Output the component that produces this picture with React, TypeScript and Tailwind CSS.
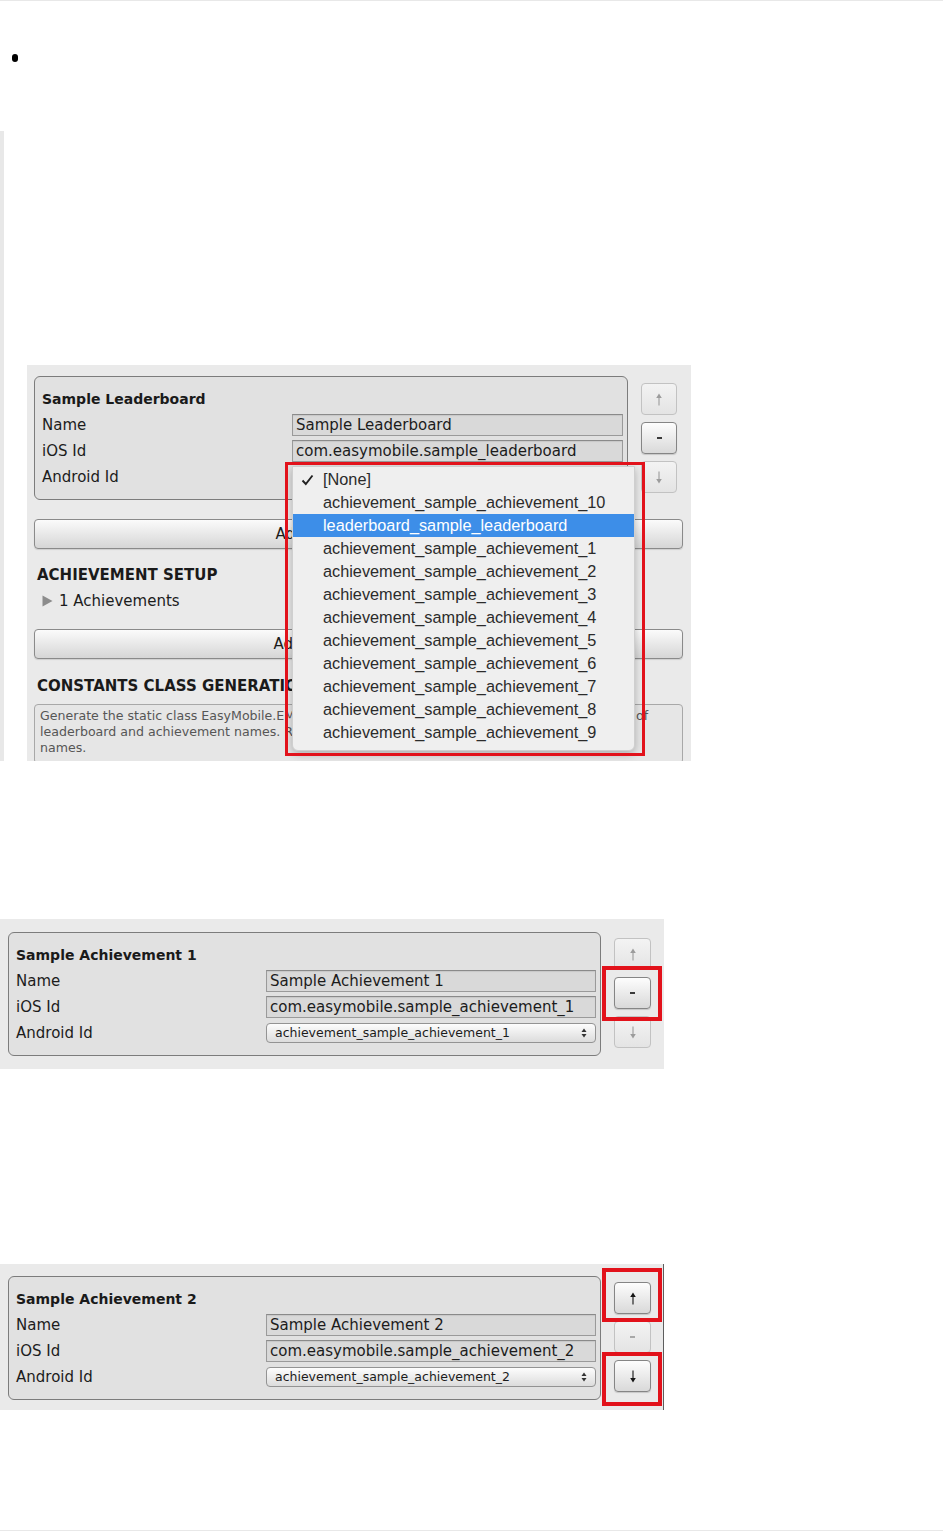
import React from "react";

const UI = "font-['DejaVu_Sans',sans-serif]";
const MENU = "font-['Liberation_Sans',Arial,sans-serif]";

function UpArrow({ on }: { on: boolean }) {
  return (
    <svg width="8" height="13" viewBox="0 0 8 13">
      <path d="M4 0.6 L1.2 5 H3.45 V12.5 H4.55 V5 H6.8 Z" fill={on ? "#151515" : "#9c9c9c"} />
    </svg>
  );
}

function DownArrow({ on }: { on: boolean }) {
  return (
    <svg width="8" height="13" viewBox="0 0 8 13">
      <path d="M4 12.4 L1.2 8 H3.45 V0.5 H4.55 V8 H6.8 Z" fill={on ? "#151515" : "#9c9c9c"} />
    </svg>
  );
}

function SideButton({ kind, on, wide }: { kind: "up" | "minus" | "down"; on: boolean; wide?: boolean }) {
  return (
    <div
      className={`${wide ? "w-[37px]" : "w-[36px]"} h-[32px] rounded-[4px] border flex items-center justify-center ${
        on
          ? "border-[#858585] bg-linear-to-b from-[#fdfdfd] to-[#d9d9d9] shadow-[0_1px_1px_rgba(0,0,0,0.15)]"
          : "border-[#c2c2c2] bg-linear-to-b from-[#f3f3f3] to-[#e4e4e4]"
      }`}
    >
      {kind === "up" ? (
        <UpArrow on={on} />
      ) : kind === "down" ? (
        <DownArrow on={on} />
      ) : (
        <div className={`w-[5px] h-[2px] ${on ? "bg-[#3a3a3a]" : "bg-[#a8a8a8]"}`} />
      )}
    </div>
  );
}

function Field({ children }: { children: React.ReactNode }) {
  return (
    <div className="flex-1 h-[22px] border border-[#9a9a9a] border-t-[#8a8a8a] bg-[#d9d9d9] shadow-[inset_0_1px_1px_rgba(0,0,0,0.08)] px-[3px] text-[15px] leading-[20px] text-[#1c1c1c] whitespace-nowrap overflow-hidden">
      {children}
    </div>
  );
}

function Popup({ children }: { children: React.ReactNode }) {
  return (
    <div className="flex-1 h-[20px] rounded-[4px] border border-[#939393] bg-linear-to-b from-[#fdfdfd] to-[#dcdcdc] pl-[8px] pr-[8px] flex items-center justify-between text-[12.5px] text-[#1c1c1c] whitespace-nowrap overflow-hidden">
      <span>{children}</span>
      <svg width="6" height="10" viewBox="0 0 6 10">
        <path d="M3 0.5 L5.5 4 H0.5 Z" fill="#333" />
        <path d="M3 9.5 L5.5 6 H0.5 Z" fill="#333" />
      </svg>
    </div>
  );
}

function Row({ label, children }: { label: string; children: React.ReactNode }) {
  return (
    <div className="h-[26px] flex items-center">
      <div className="w-[250px] text-[15px] text-[#1c1c1c] whitespace-nowrap">{label}</div>
      {children}
    </div>
  );
}

function Panel({
  title,
  name,
  ios,
  android,
  wideBox,
}: {
  title: string;
  name: string;
  ios: string;
  android: string;
  wideBox?: boolean;
}) {
  return (
    <div
      className={`${wideBox ? "w-[594px]" : "w-[593px]"} h-[124px] shrink-0 rounded-[6px] border border-[#7c7c7c] bg-[#e1e1e1] pl-[7px] pr-[4px] pt-[9px]`}
    >
      <div className="h-[26px] flex items-center font-bold text-[14px] text-[#1a1a1a]">{title}</div>
      <Row label="Name">
        <Field>{name}</Field>
      </Row>
      <Row label="iOS Id">
        <Field>{ios}</Field>
      </Row>
      <Row label="Android Id">
        <Popup>{android}</Popup>
      </Row>
    </div>
  );
}

function AddBar({ label, mt }: { label: string; mt: string }) {
  return (
    <div
      className={`${mt} w-[649px] h-[30px] rounded-[4px] border border-[#8a8a8a] bg-linear-to-b from-[#fbfbfb] to-[#d6d6d6] shadow-[0_1px_1px_rgba(0,0,0,0.12)] flex items-center justify-center text-[15px] text-[#1c1c1c]`}
    >
      {label}
    </div>
  );
}

const menuItems = [
  "[None]",
  "achievement_sample_achievement_10",
  "leaderboard_sample_leaderboard",
  "achievement_sample_achievement_1",
  "achievement_sample_achievement_2",
  "achievement_sample_achievement_3",
  "achievement_sample_achievement_4",
  "achievement_sample_achievement_5",
  "achievement_sample_achievement_6",
  "achievement_sample_achievement_7",
  "achievement_sample_achievement_8",
  "achievement_sample_achievement_9",
];

function ImageOne() {
  return (
    <div className={`relative w-[664px] h-[396px] overflow-hidden bg-[#eaeaea] pl-[7px] pt-[11px] ${UI}`}>
      <div className="flex">
        <Panel
          wideBox
          title="Sample Leaderboard"
          name="Sample Leaderboard"
          ios="com.easymobile.sample_leaderboard"
          android="[None]"
        />
        <div className="ml-[13px] mt-[7px] flex flex-col gap-[7px]">
          <SideButton kind="up" on={false} />
          <SideButton kind="minus" on={true} />
          <SideButton kind="down" on={false} />
        </div>
      </div>
      <AddBar mt="mt-[19px]" label="Add New Leaderboard" />
      <div className="mt-[13px] h-[26px] flex items-center pl-[3px] font-bold text-[15px] text-[#1a1a1a]">
        ACHIEVEMENT SETUP
      </div>
      <div className="h-[26px] flex items-center pl-[8px] text-[15px] text-[#1c1c1c]">
        <svg width="11" height="12" viewBox="0 0 11 12" className="mr-[6px]">
          <path d="M0.5 0.5 L10.5 6 L0.5 11.5 Z" fill="#8c8c8c" />
        </svg>
        1 Achievements
      </div>
      <AddBar mt="mt-[15px]" label="Add New Achievement" />
      <div className="mt-[14px] h-[26px] flex items-center pl-[3px] font-bold text-[15px] text-[#1a1a1a]">
        CONSTANTS CLASS GENERATION
      </div>
      <div className="mt-[5px] w-[649px] h-[60px] rounded-[4px] border border-[#a8a8a8] bg-[#e6e6e6] px-[5px] pt-[3px] text-[12.6px] leading-[16px] text-[#565656] whitespace-nowrap overflow-hidden">
        <div>Generate the static class EasyMobile.EM_GameServicesConstants that contains the constants of</div>
        <div>leaderboard and achievement names. Remember to regenerate if you make changes to these</div>
        <div>names.</div>
      </div>

      {/* open popup menu */}
      <div
        className={`absolute left-[265px] top-[101px] w-[343px] h-[285px] rounded-b-[6px] bg-[#efefef] border border-[#cfcfcf] shadow-[0_3px_8px_rgba(0,0,0,0.25)] pt-[1px] ${MENU}`}
      >
        {menuItems.map((it, i) => (
          <div
            key={it}
            className={`relative h-[23px] flex items-center pl-[30px] text-[16.3px] whitespace-nowrap ${
              i === 2 ? "bg-[#3d8ee8] text-white" : "text-[#2b2b2b]"
            }`}
          >
            {i === 0 && (
              <svg width="13" height="12" viewBox="0 0 13 12" className="absolute left-[8px] top-[6px]">
                <path d="M1.5 6.5 L4.8 10 L11.5 1.5" fill="none" stroke="#222" strokeWidth="1.9" />
              </svg>
            )}
            {it}
          </div>
        ))}
      </div>
      <div className="absolute left-[258px] top-[97px] w-[360px] h-[294px] border-[3px] border-[#e2121b]" />
    </div>
  );
}

function ImageTwo() {
  return (
    <div className={`relative w-[664px] h-[150px] bg-[#eaeaea] pl-[8px] pt-[13px] flex ${UI}`}>
      <Panel
        title="Sample Achievement 1"
        name="Sample Achievement 1"
        ios="com.easymobile.sample_achievement_1"
        android="achievement_sample_achievement_1"
      />
      <div className="ml-[13px] mt-[6px] flex flex-col gap-[7px]">
        <SideButton wide kind="up" on={false} />
        <SideButton wide kind="minus" on={true} />
        <SideButton wide kind="down" on={false} />
      </div>
      <div className="absolute left-[602px] top-[47px] w-[60px] h-[55px] border-[4px] border-[#e2121b]" />
    </div>
  );
}

function ImageThree() {
  return (
    <div className={`relative w-[664px] h-[146px] bg-[#eaeaea] border-r border-[#5e5e5e] pl-[8px] pt-[12px] flex ${UI}`}>
      <Panel
        title="Sample Achievement 2"
        name="Sample Achievement 2"
        ios="com.easymobile.sample_achievement_2"
        android="achievement_sample_achievement_2"
      />
      <div className="ml-[13px] mt-[6px] flex flex-col gap-[7px]">
        <SideButton wide kind="up" on={true} />
        <SideButton wide kind="minus" on={false} />
        <SideButton wide kind="down" on={true} />
      </div>
      <div className="absolute left-[602px] top-[4px] w-[60px] h-[54px] border-[4px] border-[#e2121b]" />
      <div className="absolute left-[602px] top-[88px] w-[60px] h-[54px] border-[4px] border-[#e2121b]" />
    </div>
  );
}

export default function App() {
  return (
    <div className="w-[943px] min-h-[1532px] bg-white">
      <div className="h-[1px] bg-[#e8e8e8]" />
      <div className="h-[130px] pl-[12px] pt-[53px]">
        <div className="w-[6px] h-[8px] rounded-full bg-black" />
      </div>
      <div className="border-l-[4px] border-[#e8e8e8] pl-[23px] pt-[234px]">
        <ImageOne />
      </div>
      <div className="mt-[158px]">
        <ImageTwo />
      </div>
      <div className="mt-[195px]">
        <ImageThree />
      </div>
      <div className="mt-[120px] h-[1px] bg-[#e8e8e8]" />
    </div>
  );
}
